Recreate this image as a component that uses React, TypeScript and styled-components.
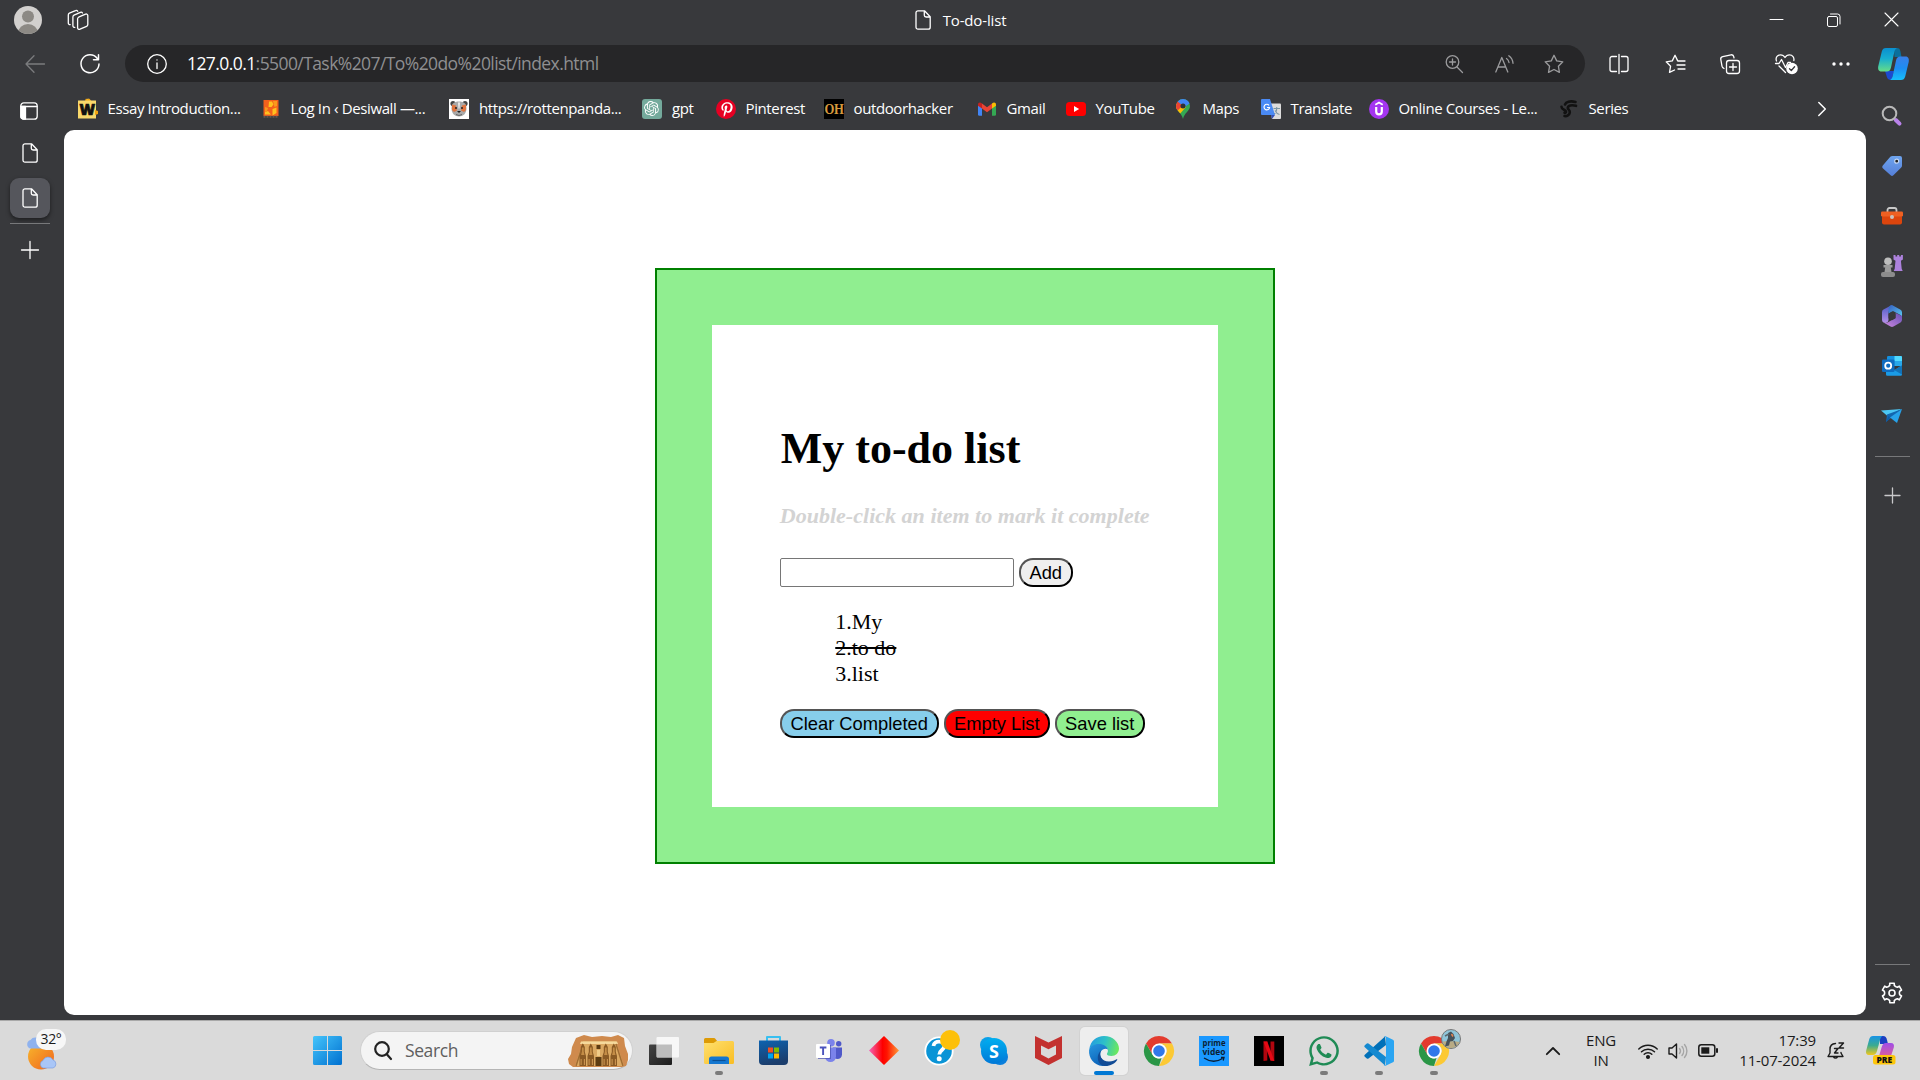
import React from "react";
import styled, { createGlobalStyle, css } from "styled-components";
import { FaWhatsapp, FaPinterestP } from "react-icons/fa";
import { SiOpenai } from "react-icons/si";

const UI = `"Open Sans", "Noto Sans", sans-serif`;
const SERIF = `"Liberation Serif", "Times New Roman", serif`;

const GlobalStyle = createGlobalStyle`
  html, body { margin: 0; padding: 0; background: #38393c; overflow: hidden; }
  *, *::before, *::after { box-sizing: border-box; }
  svg { display: block; flex: none; overflow: visible; }
`;

/* ---------- browser frame ---------- */

const Desktop = styled.div`
  width: 1920px;
  height: 1080px;
  display: flex;
  flex-direction: column;
  background: #38393c;
  font-family: ${UI};
  color: #fff;
`;

const TitleBar = styled.header`
  height: 40px;
  display: grid;
  grid-template-columns: 1fr auto 1fr;
  align-items: center;
`;

const TitleLeft = styled.div`
  display: flex;
  align-items: center;
  gap: 25px;
  padding-left: 14px;
`;

const TitleText = styled.div`
  display: flex;
  align-items: center;
  gap: 12px;
  padding-left: 1px;
  font-size: 15px;
  letter-spacing: -0.15px;
`;

const WindowButtons = styled.div`
  display: flex;
  justify-content: flex-end;
`;

const WindowButton = styled.div`
  width: 57.5px;
  display: flex;
  justify-content: center;
`;

const Toolbar = styled.div`
  height: 47px;
  display: flex;
  align-items: center;
`;

const ToolSlot = styled.div<{ $w: number }>`
  width: ${(p) => p.$w}px;
  flex: none;
  display: flex;
  align-items: center;
  justify-content: center;
`;

const NavButtons = styled.div`
  width: 125px;
  display: flex;
  padding-left: 7px;
`;

const AddressBar = styled.div`
  width: 1460px;
  height: 37px;
  border-radius: 19px;
  background: #262628;
  display: flex;
  align-items: center;
  padding-left: 22px;
  padding-right: 7px;
`;

const Url = styled.div`
  flex: 1;
  padding-left: 20px;
  padding-bottom: 1px;
  font-size: 17.5px;
  letter-spacing: -0.58px;
  color: #8f8f91;
  white-space: nowrap;
  b { font-weight: 400; color: #fff; }
`;

const Body = styled.div`
  flex: 1;
  display: flex;
  min-height: 0;
`;

const LeftRail = styled.nav`
  width: 64px;
  display: flex;
  flex-direction: column;
  padding: 14px 0 0 10px;
`;

const RailItem = styled.div<{ $h: number; $shift?: number }>`
  width: 40px;
  height: ${(p) => p.$h}px;
  padding-right: ${(p) => p.$shift ?? 0}px;
  display: flex;
  align-items: center;
  justify-content: center;
`;

const ActiveTab = styled(RailItem)`
  margin-top: -8px;
  border-radius: 9px;
  background: #55565c;
  box-shadow: 0 2px 4px rgba(0, 0, 0, 0.5);
`;

const RailLine = styled.div<{ $w: number }>`
  width: ${(p) => p.$w}px;
  height: 1px;
  background: #77787a;
`;

const Center = styled.div`
  width: 1801.5px;
  display: flex;
  flex-direction: column;
`;

const Bookmarks = styled.div`
  height: 43px;
  display: flex;
  align-items: center;
  padding-left: 13.5px;
`;

const Bookmark = styled.div<{ $w: number }>`
  width: ${(p) => p.$w}px;
  flex: none;
  display: flex;
  align-items: center;
  gap: 10px;
  font-size: 15px;
  letter-spacing: -0.38px;
  white-space: nowrap;
  span { padding-bottom: 2px; }
`;

const More = styled.div`
  margin-left: auto;
  padding-right: 40px;
`;

const Page = styled.main`
  height: 885px;
  background: #fff;
  border-radius: 10px;
  display: flex;
  align-items: center;
  justify-content: center;
  padding-bottom: 14px;
`;

const RightRail = styled.aside`
  flex: 1;
  display: flex;
  flex-direction: column;
  align-items: center;
  padding-top: 4px;
  padding-right: 1px;
`;

const RailSpacer = styled.div`
  flex: 1;
`;

/* ---------- to-do page ---------- */

const GreenBox = styled.section`
  width: 620px;
  height: 596px;
  border: 2px solid green;
  background: lightgreen;
  padding: 55px;
`;

const Card = styled.div`
  width: 506px;
  height: 482px;
  background: #fff;
  padding: 99px 68px 0 68px;
  font-family: ${SERIF};
  font-size: 22px;
  color: #000;
`;

const Heading = styled.h1`
  margin: 0;
  padding-left: 1px;
  font-size: 44px;
  line-height: 50px;
  white-space: nowrap;
`;

const Hint = styled.h4`
  margin: 29px 0 0;
  font-style: italic;
  font-size: 22px;
  line-height: 26px;
  letter-spacing: 0.02px;
  color: lightgray;
  white-space: nowrap;
`;

const Row = styled.div`
  display: flex;
  gap: 5px;
`;

const EntryRow = styled(Row)`
  margin-top: 29px;
`;

const Entry = styled.input`
  width: 234px;
  height: 29px;
  border: 1px solid #767676;
  border-radius: 2px;
  background: #fff;
  padding: 1px 3px;
`;

const PillButton = styled.button<{ $bg: string; $w: number }>`
  width: ${(p) => p.$w}px;
  height: 29px;
  padding: 1px 0 0;
  border: 2px outset #000;
  border-radius: 14px;
  background: ${(p) => p.$bg};
  color: #000;
  font-family: "Liberation Sans", Arial, sans-serif;
  font-size: 18.33px;
  line-height: 22px;
  white-space: nowrap;
`;

const List = styled.ul`
  list-style: none;
  margin: 22px 0;
  padding: 0 0 0 55.5px;
`;

const Item = styled.li<{ $done?: boolean }>`
  line-height: 26px;
  height: 26px;
  ${(p) => p.$done && css`text-decoration: line-through;`}
`;

/* ---------- taskbar ---------- */

const Taskbar = styled.footer`
  height: 60px;
  background: #dadada;
  border-top: 1px solid #a9a9a9;
  display: flex;
  align-items: center;
  color: #1b1b1b;
`;

const Weather = styled.div`
  width: 300px;
  padding-left: 26px;
`;

const WeatherBox = styled.div`
  position: relative;
  width: 40px;
  height: 44px;
  padding-top: 7px;
`;

const Temp = styled.span`
  position: absolute;
  right: 0;
  top: 0;
  width: 30px;
  height: 21px;
  border-radius: 10px;
  background: #f7f7f7;
  font-size: 14px;
  line-height: 20px;
  letter-spacing: -0.4px;
  text-align: center;
`;

const StartSlot = styled.div`
  width: 60px;
  padding-left: 13px;
`;

const SearchBox = styled.div`
  width: 273px;
  height: 39px;
  border-radius: 20px;
  background: #f4f4f4;
  border: 1px solid #d0d0d0;
  border-bottom-color: #b5b5b5;
  display: flex;
  align-items: center;
  padding: 0 4px 0 13px;
  font-size: 17.5px;
  letter-spacing: -0.4px;
  color: #5f5f5f;
`;

const SearchLabel = styled.span`
  flex: 1;
  padding: 0 0 1px 13px;
`;

const Apps = styled.div`
  display: flex;
  margin-left: 3px;
`;

const AppSlot = styled.div<{ $active?: boolean }>`
  position: relative;
  width: 48px;
  height: 48px;
  margin: 0 3.5px;
  border-radius: 5px;
  display: flex;
  align-items: center;
  justify-content: center;
  ${(p) => p.$active && css`
    background: #eeeeee;
    box-shadow: 0 0 0 1px #d2d2d2;
  `}
`;

const Running = styled.i<{ $active?: boolean }>`
  position: absolute;
  bottom: 0;
  left: 50%;
  transform: translateX(-50%);
  width: ${(p) => (p.$active ? 20 : 8)}px;
  height: 4px;
  border-radius: 2px;
  background: ${(p) => (p.$active ? "#0078d4" : "#7b7b7b")};
`;

const AvatarBadge = styled.div`
  position: absolute;
  right: -3px;
  top: 2px;
`;

const Tray = styled.div`
  flex: 1;
  display: flex;
  align-items: center;
  justify-content: flex-end;
  padding-right: 13px;
`;

const TrayText = styled.div<{ $w: number; $align: string; $ls: number }>`
  width: ${(p) => p.$w}px;
  padding-bottom: 2px;
  text-align: ${(p) => p.$align};
  font-size: 15px;
  line-height: 20px;
  letter-spacing: ${(p) => p.$ls}px;
  white-space: nowrap;
`;

/* ---------- line icons ---------- */

type LineProps = { w?: number; h?: number; vb?: string; c?: string; sw?: number; children: React.ReactNode };
const Line = ({ w = 20, h = 20, vb, c = "#fff", sw = 1.3, children }: LineProps) => (
  <svg width={w} height={h} viewBox={vb ?? `0 0 ${w} ${h}`} fill="none" stroke={c} strokeWidth={sw} strokeLinecap="round" strokeLinejoin="round">
    {children}
  </svg>
);

const FileIcon = () => (
  <Line w={16} h={20}>
    <path d="M3 .8h6.5l5.7 6v10.4a2 2 0 0 1-2 2H3a2 2 0 0 1-2-2V2.8a2 2 0 0 1 2-2zM9.3 1v4.2a1.8 1.8 0 0 0 1.8 1.8H15" />
  </Line>
);

const Avatar = () => (
  <svg width="28" height="28" viewBox="0 0 28 28">
    <clipPath id="avatar"><circle cx="14" cy="14" r="14" /></clipPath>
    <g clipPath="url(#avatar)">
      <rect width="28" height="28" fill="#d2d0ce" />
      <circle cx="14" cy="10.5" r="6" fill="#8c8984" />
      <ellipse cx="14" cy="27" rx="10" ry="9" fill="#8c8984" />
    </g>
  </svg>
);

const Workspaces = () => (
  <Line w={22} h={20}>
    <path d="M11.6 7.2l6.9-3a1.6 1.6 0 0 1 2.3 1.4v9a2 2 0 0 1-1.2 1.8l-6.6 2.8a1.6 1.6 0 0 1-2.400-1.400V9a2 2 0 0 1 1-1.8z" />
    <path d="M7.8 17.300a1.600 1.600 0 0 1-1.900-1.600V7a2 2 0 0 1 1.100-1.800l6.400-2.900a1.700 1.700 0 0 1 2.100.7" />
    <path d="M3.200 14.6A1.6 1.6 0 0 1 1.300 13V5a2 2 0 0 1 1.100-1.800L8.500.6a1.700 1.700 0 0 1 2.200.7" />
  </Line>
);

const gearPath = (() => {
  const pts: string[] = [];
  for (let k = 0; k < 6; k++) {
    const a = k * 60 - 90;
    ([[-27, 7.4], [-17, 7.9], [-13, 10], [13, 10], [17, 7.9], [27, 7.4]] as number[][]).forEach(([d, r]) => {
      const t = ((a + d) * Math.PI) / 180;
      pts.push(`${(11 + r * Math.cos(t)).toFixed(2)} ${(11 + r * Math.sin(t)).toFixed(2)}`);
    });
  }
  return `M${pts.join("L")}Z`;
})();

const STAR = "M10 1.3l2.7 5.6 6.1.9-4.4 4.4 1 6.2-5.4-2.9-5.5 2.9 1.1-6.2L1.2 7.8l6.1-.9z";

/* ---------- bookmark icons ---------- */

const WIcon = () => (
  <svg width="20" height="20" viewBox="0 0 20 20">
    <path d="M0 1.500h7l3-2 3 2h5V19.500H0z" fill="#f9d96b" />
    <path d="M7 1.500l1-2 1.500 1L11-.5l2 2zM17 11l3 1v3l-3 1z" fill="#f3a712" />
    <text x="9.200" y="16" textAnchor="middle" fontFamily="Open Sans, sans-serif" fontSize="15" fontWeight="800" fill="#111" stroke="#111" strokeWidth=".7">W</text>
  </svg>
);
const DesiIcon = () => (
  <svg width="20" height="20" viewBox="0 0 20 20">
    <rect x="2.500" y="1" width="15" height="16" fill="#f4611c" />
    <path d="M8 2.500h3l1.500 3-2 2.500H7.500zM11.500 10l4-1.500V14l-4 2.500zM4 13l3-1 3 3.500H4z" fill="#ffc11f" />
    <path d="M12 2h4v5l-2.500 1zM4 8l3 1-1 3-2 1z" fill="#f99a1c" />
    <path d="M2.500 17.800h15" stroke="#64594f" strokeWidth="2" strokeDasharray="2 1" />
  </svg>
);
const PandaIcon = () => (
  <svg width="20" height="20" viewBox="0 0 20 20">
    <rect width="20" height="20" fill="#fff" />
    <circle cx="4" cy="4.500" r="2.600" fill="#444" /><circle cx="16" cy="4.500" r="2.600" fill="#444" />
    <path d="M10 2.500c5 0 7.500 2 7.500 7S14 17.500 10 17.500 2.500 14.500 2.500 9.500s2.500-7 7.500-7z" fill="#a9a9a9" />
    <path d="M3 5.500l4 1 1 5-3 1.500-2-2zM17 5.500l-4 1-1 5 3 1.500 2-2z" fill="#df7540" />
    <circle cx="7" cy="9" r="1" fill="#222" /><circle cx="13" cy="9" r="1" fill="#222" />
    <path d="M8 12h4l-2 2z" fill="#222" /><path d="M7 15.500q3 2 6 0" stroke="#666" fill="none" />
    <path d="M9 3.500h2l-.5 6h-1z" fill="#eee" />
  </svg>
);
const GptIcon = () => (
  <svg width="20" height="20" viewBox="0 0 20 20">
    <rect width="20" height="20" rx="3" fill="#74aa9c" />
    <SiOpenai x="2" y="2" width="16" height="16" color="#fff" />
  </svg>
);
const PinIcon = () => (
  <svg width="20" height="20" viewBox="0 0 20 20">
    <circle cx="10" cy="10" r="10" fill="#e60023" />
    <FaPinterestP x="3.500" y="3" width="13" height="14.500" color="#fff" />
  </svg>
);
const OhIcon = () => (
  <svg width="20" height="20" viewBox="0 0 20 20">
    <rect width="20" height="20" fill="#000" />
    <text x="10" y="14.500" textAnchor="middle" fontFamily="Liberation Serif, serif" fontWeight="700" fontSize="14" textLength="19" lengthAdjust="spacingAndGlyphs" fill="#d79a3e">OH</text>
  </svg>
);
const GmailIcon = () => (
  <svg width="20" height="20" viewBox="0 0 20 20">
    <path d="M1 5.500v10a1.300 1.300 0 0 0 1.300 1.300H5V8.500z" fill="#4285f4" />
    <path d="M19 5.500v10a1.300 1.300 0 0 1-1.300 1.300H15V8.500z" fill="#34a853" />
    <path d="M5 4.500l5 3.800 5-3.800v5L10 13.200 5 9.500z" fill="#ea4335" />
    <path d="M1 5.500C1 3.500 3.200 2.800 5 4.500v5L1 6.800z" fill="#c5221f" />
    <path d="M19 5.500c0-2-2.200-2.700-4-1v5l4-2.700z" fill="#fbbc04" />
  </svg>
);
const YoutubeIcon = () => (
  <svg width="20" height="20" viewBox="0 0 20 20">
    <rect y="3" width="20" height="14" rx="3.500" fill="#f00" />
    <path d="M8 7l5.200 3L8 13z" fill="#fff" />
  </svg>
);
const MapsIcon = () => (
  <svg width="20" height="20" viewBox="0 0 20 20">
    <clipPath id="pin"><path d="M10 0a7 7 0 0 1 7 7c0 5-5.500 6.500-7 13-1.500-6.500-7-8-7-13a7 7 0 0 1 7-7z" /></clipPath>
    <g clipPath="url(#pin)">
      <rect width="20" height="20" fill="#34a853" />
      <path d="M0 5h9l4 3-8 9H0z" fill="#fbbc04" />
      <path d="M0 2l5 .500 5 4L4 12 0 8z" fill="#ea4335" />
      <path d="M4.500 2.500L8-1h8l1.500 5-6 4z" fill="#4285f4" />
    </g>
    <circle cx="10" cy="7" r="2.500" fill="#303134" />
  </svg>
);
const TranslateIcon = () => (
  <svg width="20" height="20" viewBox="0 0 20 20">
    <path d="M8 4.500h11a1 1 0 0 1 1 1V19a1 1 0 0 1-1 1h-8z" fill="#dcdcdc" />
    <path d="M12.500 9.500h6.500M15.700 8v1.500c0 2.500-1 4.500-2.700 5.500M14 11.500c1 2 2.500 3.500 4.500 4" stroke="#7d97a5" fill="none" strokeWidth="1.100" />
    <path d="M1 0h8l5 16H1a1 1 0 0 1-1-1V1a1 1 0 0 1 1-1z" fill="#4a8af4" />
    <path d="M10 16h4l-3 4z" fill="#3450b4" />
    <path d="M8 6.300a2.800 2.800 0 1 0 .6 2.200H6" stroke="#fff" strokeWidth="1.200" fill="none" />
  </svg>
);
const UdemyIcon = () => (
  <svg width="20" height="20" viewBox="0 0 20 20">
    <circle cx="10" cy="10" r="10" fill="#a435f0" />
    <path d="M6.300 5.800L10 3.600l3.700 2.200" stroke="#fff" strokeWidth="1.800" fill="none" />
    <path d="M7.200 8v4.600a2.800 2.800 0 0 0 5.600 0V8" stroke="#fff" strokeWidth="2.200" fill="none" />
  </svg>
);
const SeriesIcon = () => (
  <svg width="20" height="20" viewBox="0 0 20 20" fill="none" stroke="#121212" strokeWidth="2.600" strokeLinecap="round">
    <path d="M16.500 3C11 1.500 7 3 6 5.500" />
    <path d="M17 6.800C12.500 5.500 9 6.500 8.800 8.800c-.2 1.700 2.400 2.200 2 4.700-.4 2.600-3 4-5.300 3.500" />
    <path d="M2.500 7.800c0 3 4 2.700 4.500 4.700.2 1-.5 1.500-1.500 1.300" />
  </svg>
);

/* ---------- toolbar / sidebar icons ---------- */

const CopilotIcon = () => (
  <svg width="31" height="32" viewBox="0 0 31 32">
    <defs>
      <linearGradient id="cpA" x1="0" y1="0" x2="0" y2="1"><stop offset="0" stopColor="#0a8fd0" /><stop offset=".45" stopColor="#17aed0" /><stop offset="1" stopColor="#66dd87" /></linearGradient>
      <linearGradient id="cpB" x1="0" y1="0" x2="0" y2="1"><stop offset="0" stopColor="#3a7fe8" /><stop offset=".5" stopColor="#1d8df2" /><stop offset="1" stopColor="#17c0fa" /></linearGradient>
    </defs>
    <path d="M16 0h3c2 0 3 1 3.500 3.500L23.500 9h-7z" fill="#0a6f9c" />
    <path d="M7 23h9l-2.500 9c-3 0-4-1-4.600-3z" fill="#1c4bd0" />
    <path d="M8 0H19c-1.700.8-2.300 2.200-2.800 4.500L13 19.500c-.8 3-2 4-4.200 4H3.500C.5 23.500-.3 21 .3 18L3.800 3.500C4.500 1 5.700 0 8 0z" fill="url(#cpA)" />
    <path d="M23 32H12c1.700-.8 2.300-2.200 2.800-4.500L18 12.500c.8-3 2-4 4.200-4h5.300c3 0 3.800 2.500 3.200 5.500l-3.500 14.500c-.7 2.500-1.900 3.500-4.200 3.500z" fill="url(#cpB)" />
  </svg>
);

const SearchColor = () => (
  <svg width="22" height="22" viewBox="0 0 22 22">
    <path d="M14.800 15l3.700 3.700" stroke="#b982ea" strokeWidth="4" strokeLinecap="round" />
    <circle cx="8.500" cy="8.500" r="6.800" fill="none" stroke="#b9b9b9" strokeWidth="2" />
  </svg>
);
const TagIcon = () => (
  <svg width="20" height="20" viewBox="0 0 20 20">
    <defs><linearGradient id="tag" x1="0" y1="0" x2="0" y2="1"><stop offset="0" stopColor="#6ea4ee" /><stop offset="1" stopColor="#557fd8" /></linearGradient></defs>
    <path d="M10.500 0H18a2 2 0 0 1 2 2v7.500c0 1-.3 1.500-1 2.200l-7.600 7.500a2 2 0 0 1-2.800 0L.8 12.200a2 2 0 0 1 0-2.800l7.500-8.600C9 .2 9.600 0 10.500 0z" fill="url(#tag)" />
    <circle cx="14.700" cy="5.200" r="2" fill="#222" stroke="#c5d8f5" strokeWidth="1.200" />
  </svg>
);
const ToolboxIcon = () => (
  <svg width="22" height="18" viewBox="0 0 22 18">
    <path d="M6.500 5V3a2 2 0 0 1 2-2h5a2 2 0 0 1 2 2v2" fill="none" stroke="#c9c9c9" strokeWidth="1.800" />
    <rect x="1" y="8" width="20" height="9.500" rx="2" fill="#dc450d" />
    <rect y="4.500" width="22" height="5" rx="1.300" fill="#ee6022" />
    <circle cx="11" cy="10" r="2" fill="#c9c3bf" />
  </svg>
);
const GamesIcon = () => (
  <svg width="22" height="22" viewBox="0 0 22 22">
    <path d="M12.500 0h2v1.500h1.700V0h2v1.500h1.700V0h2v4.500l-2 1.300.8 8 1 2.200h-9l1-2.200.8-8-2-1.300z" fill="#ad82dd" />
    <circle cx="7" cy="6.300" r="3.800" fill="#bdbdbd" />
    <path d="M2.500 10h9v2.500H9.800l.7 4.500h-7l.7-4.500H2.500z" fill="#9b9b9b" />
    <rect y="17" width="14" height="5" rx="2" fill="#8c8c8c" />
  </svg>
);
const M365Icon = () => (
  <svg width="20" height="22" viewBox="0 0 20 22">
    <defs>
      <linearGradient id="m1" x1="0" y1="0" x2="1" y2="1"><stop offset="0" stopColor="#3560c0" /><stop offset="1" stopColor="#5ccdf5" /></linearGradient>
      <linearGradient id="m2" x1="0" y1="0" x2="0" y2="1"><stop offset="0" stopColor="#4f5cc6" /><stop offset="1" stopColor="#b490e8" /></linearGradient>
      <linearGradient id="m3" x1="0" y1="1" x2="1" y2="0"><stop offset="0" stopColor="#d08ae0" /><stop offset="1" stopColor="#6550b8" /></linearGradient>
    </defs>
    <path d="M9 .4L1.500 4.500A3 3 0 0 0 0 7.200V15a3 3 0 0 0 1.500 2.500c1.500.8 5 .5 5-2.500V7z" fill="url(#m2)" />
    <path d="M10 0L18.500 4.800A3 3 0 0 1 20 7.300V13c0-1.500-.7-2.500-2-3.200L11 6 6.500 8.500V4.500C6.500 2 8 0 10 0z" fill="url(#m1)" />
    <path d="M20 11v3.800a3 3 0 0 1-1.500 2.600l-7 4.100a3 3 0 0 1-3 0L1.500 17.500c1.500.7 3 .7 4.500-.2l7.500-4.300V8l4.500 2c1.500.8 2 1 2 1z" fill="url(#m3)" />
    <path d="M6.500 8.800l3.500-2.100 3.500 2.100v4.400L10 15.300l-3.500-2.100z" fill="#38393c" />
  </svg>
);
const OutlookIcon = () => (
  <svg width="20" height="20" viewBox="0 0 20 20">
    <rect x="5" width="15" height="10" rx="1.300" fill="#1490df" />
    <path d="M12.500 0H18.700A1.300 1.300 0 0 1 20 1.300V5h-7.500z" fill="#50d9ff" /><path d="M12.500 5H20v5h-7.500z" fill="#28a8ea" />
    <path d="M4 10l9 4 7-5v9.500a1.300 1.300 0 0 1-1.300 1.300H5.300A1.300 1.300 0 0 1 4 18.500z" fill="#1a9be6" />
    <path d="M20 9.500v9L12 14z" fill="#1272b8" />
    <rect y="3.500" width="12.500" height="12.500" rx="1.300" fill="#0f6cc0" />
    <circle cx="6.200" cy="9.700" r="3" fill="none" stroke="#fff" strokeWidth="1.800" />
  </svg>
);
const DropIcon = () => (
  <svg width="22" height="16" viewBox="0 0 22 16">
    <path d="M0 2.500L21 1 6.500 8z" fill="#4cc7f4" />
    <path d="M21 1L6 6.500 5 14z" fill="#1266b0" />
    <path d="M21 1l-5 14-7-5.500z" fill="#27a2ea" />
    <path d="M5 14.500l4-4.500-1.500-2z" fill="#0e58a0" />
  </svg>
);

/* ---------- taskbar icons ---------- */

const WeatherIcon = () => (
  <svg width="31" height="35" viewBox="0 0 31 35">
    <defs><linearGradient id="sun" x1="0" y1="0" x2="1" y2="1"><stop offset="0" stopColor="#f8b72c" /><stop offset="1" stopColor="#f0641e" /></linearGradient></defs>
    <circle cx="15" cy="20.500" r="13" fill="url(#sun)" />
    <path d="M4 12.500a4.500 4.500 0 0 1 .5-8.500A6 6 0 0 1 15 5.500v7z" fill="#8fb2ee" />
    <path d="M17 32a4 4 0 0 1 0-7.500 5.500 5.500 0 0 1 10-.5 4.200 4.200 0 0 1 0 8z" fill="#a9c6f7" stroke="#7f9fe0" strokeWidth=".7" />
  </svg>
);
const StartIcon = () => (
  <svg width="29" height="29" viewBox="0 0 29 29">
    <defs><linearGradient id="win" x1="0" y1="0" x2="1" y2="1"><stop offset="0" stopColor="#45c5fb" /><stop offset="1" stopColor="#0070d0" /></linearGradient></defs>
    <path d="M1.500 0H14v14H0V1.500A1.500 1.500 0 0 1 1.500 0zM15 0h12.500A1.500 1.500 0 0 1 29 1.500V14H15zM0 15h14v14H1.500A1.500 1.500 0 0 1 0 27.500zM15 15h14v12.500a1.500 1.500 0 0 1-1.500 1.500H15z" fill="url(#win)" />
  </svg>
);
const TempleFigure = ({ x }: { x: number }) => (
  <g transform={`translate(${x} 0)`}>
    <path d="M1.300 12l2-3.500 2 3.500v5l1.200 4v10H0V21l1.300-4z" fill="#8a5a24" />
    <path d="M2.400 12.500h1.800v4l.8 3.500H1.600l.8-3.500z" fill="#c48d47" />
    <path d="M1.600 24v6M4.900 24v6" stroke="#d09a55" strokeWidth="1" />
  </g>
);
const TempleIcon = () => (
  <svg width="60" height="32" viewBox="0 0 60 32">
    <path d="M8 3l8-3 8 2 10-1 9 1 7-2 6 3 1 8 3 8v6l-2 6-4 1H5l-4-3-1-5 3-5 1-7z" fill="#cf8a4d" />
    <path d="M15 6h33l8 25H7z" fill="#dba962" />
    <path d="M13 6.500h36l1 2.500H12z" fill="#f5d99c" />
    <path d="M15 9L8 31M48 9l7 22" stroke="#a26d33" strokeWidth="1.500" />
    <TempleFigure x={11.500} /><TempleFigure x={19.500} /><TempleFigure x={34.500} /><TempleFigure x={42.500} />
    <path d="M28.500 10h4v4h-4zM27.500 22h6v9h-6z" fill="#5d3c12" />
    <path d="M29 15h3v6h-3z" fill="#f0cb88" />
  </svg>
);
const TaskView = () => (
  <svg width="30" height="28" viewBox="0 0 30 28">
    <defs><linearGradient id="tv" x1="0" y1="0" x2="1" y2="1"><stop offset="0" stopColor="#444" /><stop offset="1" stopColor="#1c1c1c" /></linearGradient></defs>
    <rect y="7.500" width="23" height="20.500" rx="1" fill="url(#tv)" />
    <rect x="7.500" width="22.500" height="20.500" rx="1" fill="#f7f7f7" />
    <path d="M8 7.500h15v12.700H8z" fill="#bdbdbd" />
  </svg>
);
const ExplorerIcon = () => (
  <svg width="30" height="26" viewBox="0 0 30 26">
    <defs><linearGradient id="fold" x1="0" y1="0" x2="1" y2="1"><stop offset="0" stopColor="#ffe06f" /><stop offset="1" stopColor="#f9bd23" /></linearGradient></defs>
    <path d="M0 1.500A1.500 1.500 0 0 1 1.500 0h8c1 0 1.500.3 2 1l2 2.500V10H0z" fill="#dd9a06" />
    <path d="M0 5h9.500l3-2H28.500A1.500 1.500 0 0 1 30 4.500V24.500A1.500 1.500 0 0 1 28.500 26h-27A1.500 1.500 0 0 1 0 24.500z" fill="url(#fold)" />
    <path d="M5 26v-5a2.500 2.500 0 0 1 2.500-2.500h15A2.500 2.500 0 0 1 25 21v5z" fill="#1477d0" />
    <path d="M8.500 22.500h13" stroke="#0a4f94" strokeWidth="1.200" />
  </svg>
);
const StoreIcon = () => (
  <svg width="29" height="29" viewBox="0 0 29 29">
    <defs><linearGradient id="st" x1="0" y1="0" x2="0.300" y2="1"><stop offset="0" stopColor="#0d63b0" /><stop offset="1" stopColor="#1b3d6c" /></linearGradient></defs>
    <path d="M8 6V1h13v5" fill="none" stroke="#38bff0" strokeWidth="2" strokeLinejoin="round" />
    <path d="M0 4.500h29v20.500a4 4 0 0 1-4 4H4a4 4 0 0 1-4-4z" fill="url(#st)" />
    <path d="M9 11.500h5v5H9z" fill="#f25022" /><path d="M15 11.500h5v5h-5z" fill="#7fba00" />
    <path d="M9 17.500h5v5H9z" fill="#00a4ef" /><path d="M15 17.500h5v5h-5z" fill="#ffb900" />
  </svg>
);
const TeamsIcon = () => (
  <svg width="26" height="24" viewBox="0 0 26 24">
    <circle cx="15" cy="3.700" r="3.800" fill="#7b83eb" /><circle cx="22.700" cy="4.700" r="2.700" fill="#5059c9" />
    <path d="M17 8.500h9v7a4.500 4.500 0 0 1-9 0z" fill="#5059c9" />
    <path d="M9 8.500h11v9a5.500 5.500 0 0 1-11 0z" fill="#7b83eb" />
    <path d="M2 6h13v14H2z" fill="#4a51b0" opacity=".7" />
    <rect y="5" width="14" height="14" rx="1" fill="#fff" />
    <path d="M3.800 8.500h6.600M7.100 8.500V16" stroke="#4b53bc" strokeWidth="1.900" />
  </svg>
);
const DiamondIcon = () => (
  <svg width="30" height="29" viewBox="0 0 30 29">
    <defs><linearGradient id="dia"><stop offset="0" stopColor="#f565b8" /><stop offset=".45" stopColor="#fe0000" /><stop offset=".6" stopColor="#ff1500" /><stop offset="1" stopColor="#ff9a3a" /></linearGradient></defs>
    <path d="M15 0l15 14.500L15 29 0 14.500z" fill="url(#dia)" />
  </svg>
);
const HelpIcon = () => (
  <svg width="30" height="30" viewBox="0 0 30 30">
    <circle cx="15" cy="15" r="13.700" fill="#0a94d6" stroke="#fff" strokeWidth="1.800" />
    <path d="M9.500 10c.3-3 3-4.600 6-4.300 3 .2 5 2 4.800 4.700-.2 3.600-5 3.600-5 8" fill="none" stroke="#fff" strokeWidth="3.800" />
    <circle cx="15.200" cy="22.800" r="2.500" fill="#fff" />
    <circle cx="26" cy="4" r="10" fill="#fdc00a" />
  </svg>
);
const SkypeIcon = () => (
  <svg width="28" height="28" viewBox="0 0 28 28">
    <defs><linearGradient id="sk" x1="0" y1="0" x2="0" y2="1"><stop offset="0" stopColor="#00aff0" /><stop offset="1" stopColor="#0078d7" /></linearGradient></defs>
    <circle cx="8" cy="8" r="8" fill="#0aa0e8" /><circle cx="20" cy="20" r="8" fill="#0a7fdc" /><circle cx="14" cy="14" r="13" fill="url(#sk)" />
    <text x="14" y="20.500" textAnchor="middle" fontFamily="Open Sans, sans-serif" fontWeight="700" fontSize="18" fill="#fff">S</text>
  </svg>
);
const McAfeeIcon = () => (
  <svg width="27" height="29" viewBox="0 0 27 29">
    <path d="M0 0l13.500 6.500L27 0v22l-13.500 7L0 22zM6 9.500V18.500l7.500 4 7.500-4V9.500l-7.500 3.800z" fill="#c3312f" fillRule="evenodd" />
  </svg>
);
const EdgeIcon = () => (
  <svg width="30" height="30" viewBox="0 0 30 30">
    <defs>
      <linearGradient id="e1" x1="0" y1=".3" x2="1" y2=".5"><stop offset="0" stopColor="#249be0" /><stop offset=".5" stopColor="#2dc0c8" /><stop offset="1" stopColor="#6be85f" /></linearGradient>
      <linearGradient id="e2" x1="0" y1="0" x2="0.500" y2="1"><stop offset="0" stopColor="#2796df" /><stop offset="1" stopColor="#0c62b8" /></linearGradient>
    </defs>
    <path d="M.3 13C1.500 5 7.500 0 15 0c9 0 15 6.500 15 12.500 0 4.500-3.400 7.500-7.500 7.500-3 0-4.600-1-4.600-2 0-.8 1-1.200 1-3.500 0-3-3.500-5.500-8-5.500-5 0-8.500 1.500-10.600 4z" fill="url(#e1)" />
    <path d="M.1 14C1 10.500 5 8 9.800 8c5 0 8.500 2.500 9.100 5.500-2-1.500-6.500-.5-7.500 3.500-1 5 3.500 10 9 10-2 2-4.500 3-7 2.900C5 29.500-.6 22 .1 14z" fill="url(#e2)" />
    <path d="M12 14.500c-2.500 4.500.5 11 8 11 3.500 0 6-1.300 7.500-2.200.6-.3 1 .2.700.7C26 27.500 21.500 30 16.500 30 9 30 6 20 12 14.500z" fill="#124c96" />
  </svg>
);
const ChromeIcon = () => (
  <svg width="30" height="30" viewBox="0 0 30 30">
    <path d="M2 7.500A15 15 0 0 1 28 7.500H15L8.500 18.700z" fill="#e33b2e" />
    <path d="M28 7.500A15 15 0 0 1 15 30l6.500-11.300a7.500 7.500 0 0 0-1-9.300L15 7.500z" fill="#fcc934" />
    <path d="M2 7.500l6.500 11.200a7.500 7.500 0 0 0 9 3.400L15 30A15 15 0 0 1 2 7.500z" fill="#2a9646" />
    <circle cx="15" cy="15" r="7.500" fill="#fff" /><circle cx="15" cy="15" r="5.800" fill="#3178ea" />
  </svg>
);
const PrimeIcon = () => (
  <svg width="30" height="30" viewBox="0 0 30 30">
    <rect width="30" height="30" fill="#1a98ff" />
    <g fontFamily="Open Sans, sans-serif" fontWeight="700" fontSize="8.500" fill="#0b1e33" textAnchor="middle">
      <text x="15" y="10" textLength="23" lengthAdjust="spacingAndGlyphs">prime</text>
      <text x="15" y="19" textLength="23" lengthAdjust="spacingAndGlyphs">video</text>
    </g>
    <path d="M5 22c6 4 13 4 18.500.5M22 21.500h3l-.8 3" fill="none" stroke="#0b1e33" strokeWidth="1.300" />
  </svg>
);
const NetflixIcon = () => (
  <svg width="30" height="30" viewBox="0 0 30 30">
    <rect width="30" height="30" fill="#000" />
    <path d="M9.500 5.500h3.800v19l-3.800.5zM16.500 5.500h3.800V25l-3.800-.5z" fill="#b1060f" />
    <path d="M9.500 5.500h3.800L20.300 25l-3.800-.5z" fill="#e50914" />
  </svg>
);
const VsCodeIcon = () => (
  <svg width="30" height="30" viewBox="0 0 30 30">
    <path d="M22 9L4.500 22.500a1.500 1.500 0 0 1-1.700 0L.8 20.800a1.300 1.300 0 0 1 0-2L21 .500z" fill="#0070b8" />
    <path d="M22 21L4.500 7.500a1.500 1.500 0 0 0-1.700 0L.8 9.200a1.300 1.300 0 0 0 0 2L21 29.500z" fill="#1489d0" />
    <path d="M21.500.2L29 3.700a1.800 1.800 0 0 1 1 1.600v19.400a1.800 1.800 0 0 1-1 1.600l-7.500 3.500c-1 .3-1.500 0-2-.5 1 .5 2.500 0 2.500-1.500V2.200C22 1 20.500.2 19.500.7c.5-.5 1.200-.8 2-.5z" fill="#2aa5f2" />
  </svg>
);
const PhotoBadge = () => (
  <svg width="20" height="20" viewBox="0 0 20 20">
    <circle cx="10" cy="10" r="9.500" fill="#8fc4d8" stroke="#777" />
    <path d="M1.500 12.500l6-.5 8 .5 3 .5a9 9 0 0 1-16 2z" fill="#b8ab85" />
    <path d="M7 4l3-1.500L12.500 5l1.500 4-2 3-3 .5-1 4-4 1 1.500-5L7 9z" fill="#46525a" />
    <path d="M13 12l2 5M4 7l4-2" stroke="#5c686f" strokeWidth="1.500" />
    <path d="M10.500 5l1.500 2.500" stroke="#e38553" strokeWidth="1.500" />
  </svg>
);
const CopilotPre = () => (
  <svg width="30" height="30" viewBox="0 0 30 30">
    <defs>
      <linearGradient id="pa" x1="0" y1="0" x2="0" y2="1"><stop offset="0" stopColor="#1793e6" /><stop offset=".5" stopColor="#3cab8f" /><stop offset="1" stopColor="#f2c81c" /></linearGradient>
      <linearGradient id="pb" x1="0" y1="0" x2="0" y2="1"><stop offset="0" stopColor="#a04de8" /><stop offset="1" stopColor="#f3657f" /></linearGradient>
    </defs>
    <path d="M14 0h3c2.500 0 3.300 1.500 4 4l1 4h-8z" fill="#1b3fc2" />
    <path d="M7 0h9.500c-1.500 1-2 2-2.500 4l-3 11c-.8 2.600-2 4-4.200 4H3c-2.500 0-3.500-2-2.800-4.500L3.300 3C4 1 5 0 7 0z" fill="url(#pa)" />
    <path d="M20 26H10c1.500-.8 2-2 2.500-4l3.200-11c.8-2.600 2-4 4.200-4H25c2.500 0 3.500 2 2.800 4.500L24 23c-.6 2-2 3-4 3z" fill="url(#pb)" />
    <rect x="7" y="19" width="22.500" height="9.500" rx="2.500" fill="#fdc60a" />
    <text x="18.300" y="26.800" textAnchor="middle" fontFamily="Open Sans, sans-serif" fontWeight="800" fontSize="8.500" fill="#111">PRE</text>
  </svg>
);

/* ---------- data ---------- */

const bookmarks: [string, number, React.ReactNode][] = [
  ["Essay Introduction...", 183, <WIcon />],
  ["Log In ‹ Desiwall —...", 188.5, <DesiIcon />],
  ["https://rottenpanda...", 193, <PandaIcon />],
  ["gpt", 73.5, <GptIcon />],
  ["Pinterest", 108, <PinIcon />],
  ["outdoorhacker", 153, <OhIcon />],
  ["Gmail", 89, <GmailIcon />],
  ["YouTube", 107, <YoutubeIcon />],
  ["Maps", 88, <MapsIcon />],
  ["Translate", 108, <TranslateIcon />],
  ["Online Courses - Le...", 190, <UdemyIcon />],
  ["Series", 80, <SeriesIcon />],
];

const todos = [
  { text: "1.My" },
  { text: "2.to do", done: true },
  { text: "3.list" },
];

const apps: { icon: React.ReactNode; running?: boolean; active?: boolean; badge?: boolean }[] = [
  { icon: <TaskView /> },
  { icon: <ExplorerIcon />, running: true },
  { icon: <StoreIcon /> },
  { icon: <TeamsIcon /> },
  { icon: <DiamondIcon /> },
  { icon: <HelpIcon /> },
  { icon: <SkypeIcon /> },
  { icon: <McAfeeIcon /> },
  { icon: <EdgeIcon />, running: true, active: true },
  { icon: <ChromeIcon /> },
  { icon: <PrimeIcon /> },
  { icon: <NetflixIcon /> },
  { icon: <FaWhatsapp size={34} color="#1f8b55" />, running: true },
  { icon: <VsCodeIcon />, running: true },
  { icon: <ChromeIcon />, running: true, badge: true },
];

const sidebar = [<SearchColor />, <TagIcon />, <ToolboxIcon />, <GamesIcon />, <M365Icon />, <OutlookIcon />, <DropIcon />];

const PlusIcon = () => (
  <Line w={18} h={18}><path d="M9 .5v17M.5 9h17" /></Line>
);

export default function App() {
  return (
    <Desktop>
      <GlobalStyle />
      <TitleBar>
        <TitleLeft><Avatar /><Workspaces /></TitleLeft>
        <TitleText><FileIcon />To-do-list</TitleText>
        <WindowButtons>
          <WindowButton><Line w={13} h={14} sw={1}><path d="M0 6.500h13" /></Line></WindowButton>
          <WindowButton><Line w={13} h={14} sw={1}><path d="M2 3.500h7a1.500 1.500 0 0 1 1.500 1.500v7A1.500 1.500 0 0 1 9 13.500H2A1.500 1.500 0 0 1 .5 12V5A1.500 1.500 0 0 1 2 3.500zM3.500 1h7A2.500 2.500 0 0 1 13 3.500V11" /></Line></WindowButton>
          <WindowButton><Line w={13} h={13} sw={1.100}><path d="M0 0l13 13M13 0L0 13" /></Line></WindowButton>
        </WindowButtons>
      </TitleBar>
      <Toolbar>
        <NavButtons>
          <ToolSlot $w={55}><Line w={20} h={18} c="#7b7c7e"><path d="M19.500 9H1M9 .8L1 9l8 8.200" /></Line></ToolSlot>
          <ToolSlot $w={55}><Line w={20} h={20} sw={1.500}><path d="M17.300 4.500A9 9 0 1 0 19 10M18.500.8v5h-5" /></Line></ToolSlot>
        </NavButtons>
        <AddressBar>
          <Line w={20} h={20}><circle cx="10" cy="10" r="9.300" /><path d="M10 9v5.500M10 5.800v.2" /></Line>
          <Url><b>127.0.0.1</b>:5500/Task%207/To%20do%20list/index.html</Url>
          <ToolSlot $w={51}><Line w={18} h={18} c="#9b9b9d"><circle cx="7.500" cy="7" r="6.300" /><path d="M12 12l5.500 5.500M7.500 4v6M4.500 7h6" /></Line></ToolSlot>
          <ToolSlot $w={50}><Line w={19} h={18} c="#9b9b9d"><path d="M.8 17L6.800 2.500 12.800 17M3 12h7.700M11.500 3.500a6 6 0 0 1 2.500 4M13.800.800a10 10 0 0 1 4.200 7.500" /></Line></ToolSlot>
          <ToolSlot $w={49}><Line w={20} h={20} c="#9b9b9d"><path d={STAR} /></Line></ToolSlot>
        </AddressBar>
        <ToolSlot $w={68}><Line w={20} h={20}><path d="M7.500 2.500H3A2 2 0 0 0 1 4.500v11a2 2 0 0 0 2 2h4.500M12.500 2.500H17a2 2 0 0 1 2 2v11a2 2 0 0 1-2 2h-4.500M10 .5v19" /></Line></ToolSlot>
        <ToolSlot $w={44}><Line w={21} h={20}><path d="M12.700 6.900L10 1.300 7.300 6.900l-6.100.9 4.400 4.400-1.100 6.200L9.500 16M13 7h7M12 11h8M13 15h7" /></Line></ToolSlot>
        <ToolSlot $w={66}><Line w={20} h={20}><rect x="6.500" y="6.500" width="13" height="13" rx="2.500" /><path d="M13 9.500v7M9.500 13h7M4 14.500C2.800 14 2.300 13.500 2 12.200L.8 5.500C.5 4 1.300 3 2.700 2.700L11 .8c1.500-.3 2.500.5 2.800 2l.2 1" /></Line></ToolSlot>
        <ToolSlot $w={47}>
          <Line w={23} h={20}>
            <path d="M1.500 7C0 3 3 .8 5.500 .8c2 0 3.500 1 4.500 2.700C11 1.800 12.500.8 14.500.8c3 0 5 2.700 4.300 5.700M4 12l6.500 6.500M.5 9.500h3.500l2.500-4 4 8 2.500-5h2.500" />
            <circle cx="17" cy="14.500" r="5.800" fill="#fff" stroke="none" /><path d="M14.500 14.800l1.800 1.700 3.300-3.800" stroke="#38393c" />
          </Line>
        </ToolSlot>
        <ToolSlot $w={61}><Line w={18} h={4}><g fill="#fff" stroke="none"><circle cx="2" cy="2" r="1.700" /><circle cx="9" cy="2" r="1.700" /><circle cx="16" cy="2" r="1.700" /></g></Line></ToolSlot>
        <ToolSlot $w={45}><CopilotIcon /></ToolSlot>
      </Toolbar>
      <Body>
        <LeftRail>
          <RailItem $h={19} $shift={2}><Line w={18} h={18}><rect x=".8" y=".8" width="16.400" height="16.400" rx="3" /><path d="M1 4.500h16" /><path d="M1 4.500h4.500V17H3a2 2 0 0 1-2-2z" fill="#fff" /></Line></RailItem>
          <RailItem $h={66}><FileIcon /></RailItem>
          <ActiveTab $h={40}><FileIcon /></ActiveTab>
          <RailItem $h={11}><RailLine $w={40} /></RailItem>
          <RailItem $h={41} $shift={1}><PlusIcon /></RailItem>
        </LeftRail>
        <Center>
          <Bookmarks>
            {bookmarks.map(([label, w, icon]) => (
              <Bookmark key={label} $w={w}>{icon}<span>{label}</span></Bookmark>
            ))}
            <More><Line w={8} h={14} sw={1.500}><path d="M.8.500L7.300 7l-6.500 6.500" /></Line></More>
          </Bookmarks>
          <Page>
            <GreenBox>
              <Card>
                <Heading>My to-do list</Heading>
                <Hint>Double-click an item to mark it complete</Hint>
                <EntryRow>
                  <Entry />
                  <PillButton $bg="#efefef" $w={54}>Add</PillButton>
                </EntryRow>
                <List>
                  {todos.map((t) => <Item key={t.text} $done={t.done}>{t.text}</Item>)}
                </List>
                <Row>
                  <PillButton $bg="skyblue" $w={159}>Clear Completed</PillButton>
                  <PillButton $bg="red" $w={106}>Empty List</PillButton>
                  <PillButton $bg="lightgreen" $w={90}>Save list</PillButton>
                </Row>
              </Card>
            </GreenBox>
          </Page>
        </Center>
        <RightRail>
          {sidebar.map((icon, i) => <RailItem key={i} $h={50}>{icon}</RailItem>)}
          <RailItem $h={31}><RailLine $w={35} /></RailItem>
          <RailItem $h={46}><Line w={15} h={15} c="#c9c9cb"><path d="M7.500 0v15M0 7.500h15" /></Line></RailItem>
          <RailSpacer />
          <RailLine $w={35} />
          <RailItem $h={55}><Line w={22} h={22} sw={1.600}><path d={gearPath} /><circle cx="11" cy="11" r="3" /></Line></RailItem>
        </RightRail>
      </Body>
      <Taskbar>
        <Weather><WeatherBox><WeatherIcon /><Temp>32°</Temp></WeatherBox></Weather>
        <StartSlot><StartIcon /></StartSlot>
        <SearchBox>
          <Line w={18} h={19} c="#222" sw={2.200}><circle cx="8" cy="8" r="6.800" /><path d="M12.800 13.300l4.200 4.700" /></Line>
          <SearchLabel>Search</SearchLabel>
          <TempleIcon />
        </SearchBox>
        <Apps>
          {apps.map((a, i) => (
            <AppSlot key={i} $active={a.active}>
              {a.icon}
              {a.running && <Running $active={a.active} />}
              {a.badge && <AvatarBadge><PhotoBadge /></AvatarBadge>}
            </AppSlot>
          ))}
        </Apps>
        <Tray>
          <ToolSlot $w={34}><Line w={14} h={8} c="#1b1b1b" sw={1.800}><path d="M.8 7.200L7 1l6.200 6.200" /></Line></ToolSlot>
          <TrayText $w={62} $align="center" $ls={-0.2}>ENG<br />IN</TrayText>
          <ToolSlot $w={32}>
            <Line w={20} h={16} c="#1b1b1b" sw={1.500}><path d="M.8 6a13 13 0 0 1 18.400 0M3.500 8.800a9.300 9.300 0 0 1 13 0M6.200 11.300a5.500 5.500 0 0 1 7.600 0" /><circle cx="10" cy="14" r="1.300" fill="#1b1b1b" /></Line>
          </ToolSlot>
          <ToolSlot $w={28}>
            <Line w={20} h={16} c="#1b1b1b" sw={1.400}><path d="M1 5h3l4.500-4v14L4 11H1z" /><path d="M11.500 5.500a4 4 0 0 1 0 5M14 3.500a7 7 0 0 1 0 9M16.500 1.500a10 10 0 0 1 0 13" stroke="#a5a5a5" /></Line>
          </ToolSlot>
          <ToolSlot $w={32}>
            <Line w={20} h={13} c="#1b1b1b" sw={1.500}><rect x=".8" y=".8" width="16" height="11.400" rx="2.500" /><rect x="3.300" y="3.300" width="8" height="6.400" fill="#1b1b1b" stroke="none" /><path d="M19 5v3" strokeWidth="2" /></Line>
          </ToolSlot>
          <TrayText $w={92} $align="right" $ls={-0.15}>17:39<br />11-07-2024</TrayText>
          <ToolSlot $w={39}>
            <Line w={18} h={18} c="#1b1b1b" sw={1.400}><path d="M8.500 1.500C4.500 1.500 3 4.500 3 7.500V11L1 14.500h15L14 11v-.5M6.500 15a2.300 2.300 0 0 0 4 0M7.500 6.500h3.500L7.500 11H11M12 1h4.500L12 6h4.500" /></Line>
          </ToolSlot>
          <ToolSlot $w={52}><CopilotPre /></ToolSlot>
        </Tray>
      </Taskbar>
    </Desktop>
  );
}
